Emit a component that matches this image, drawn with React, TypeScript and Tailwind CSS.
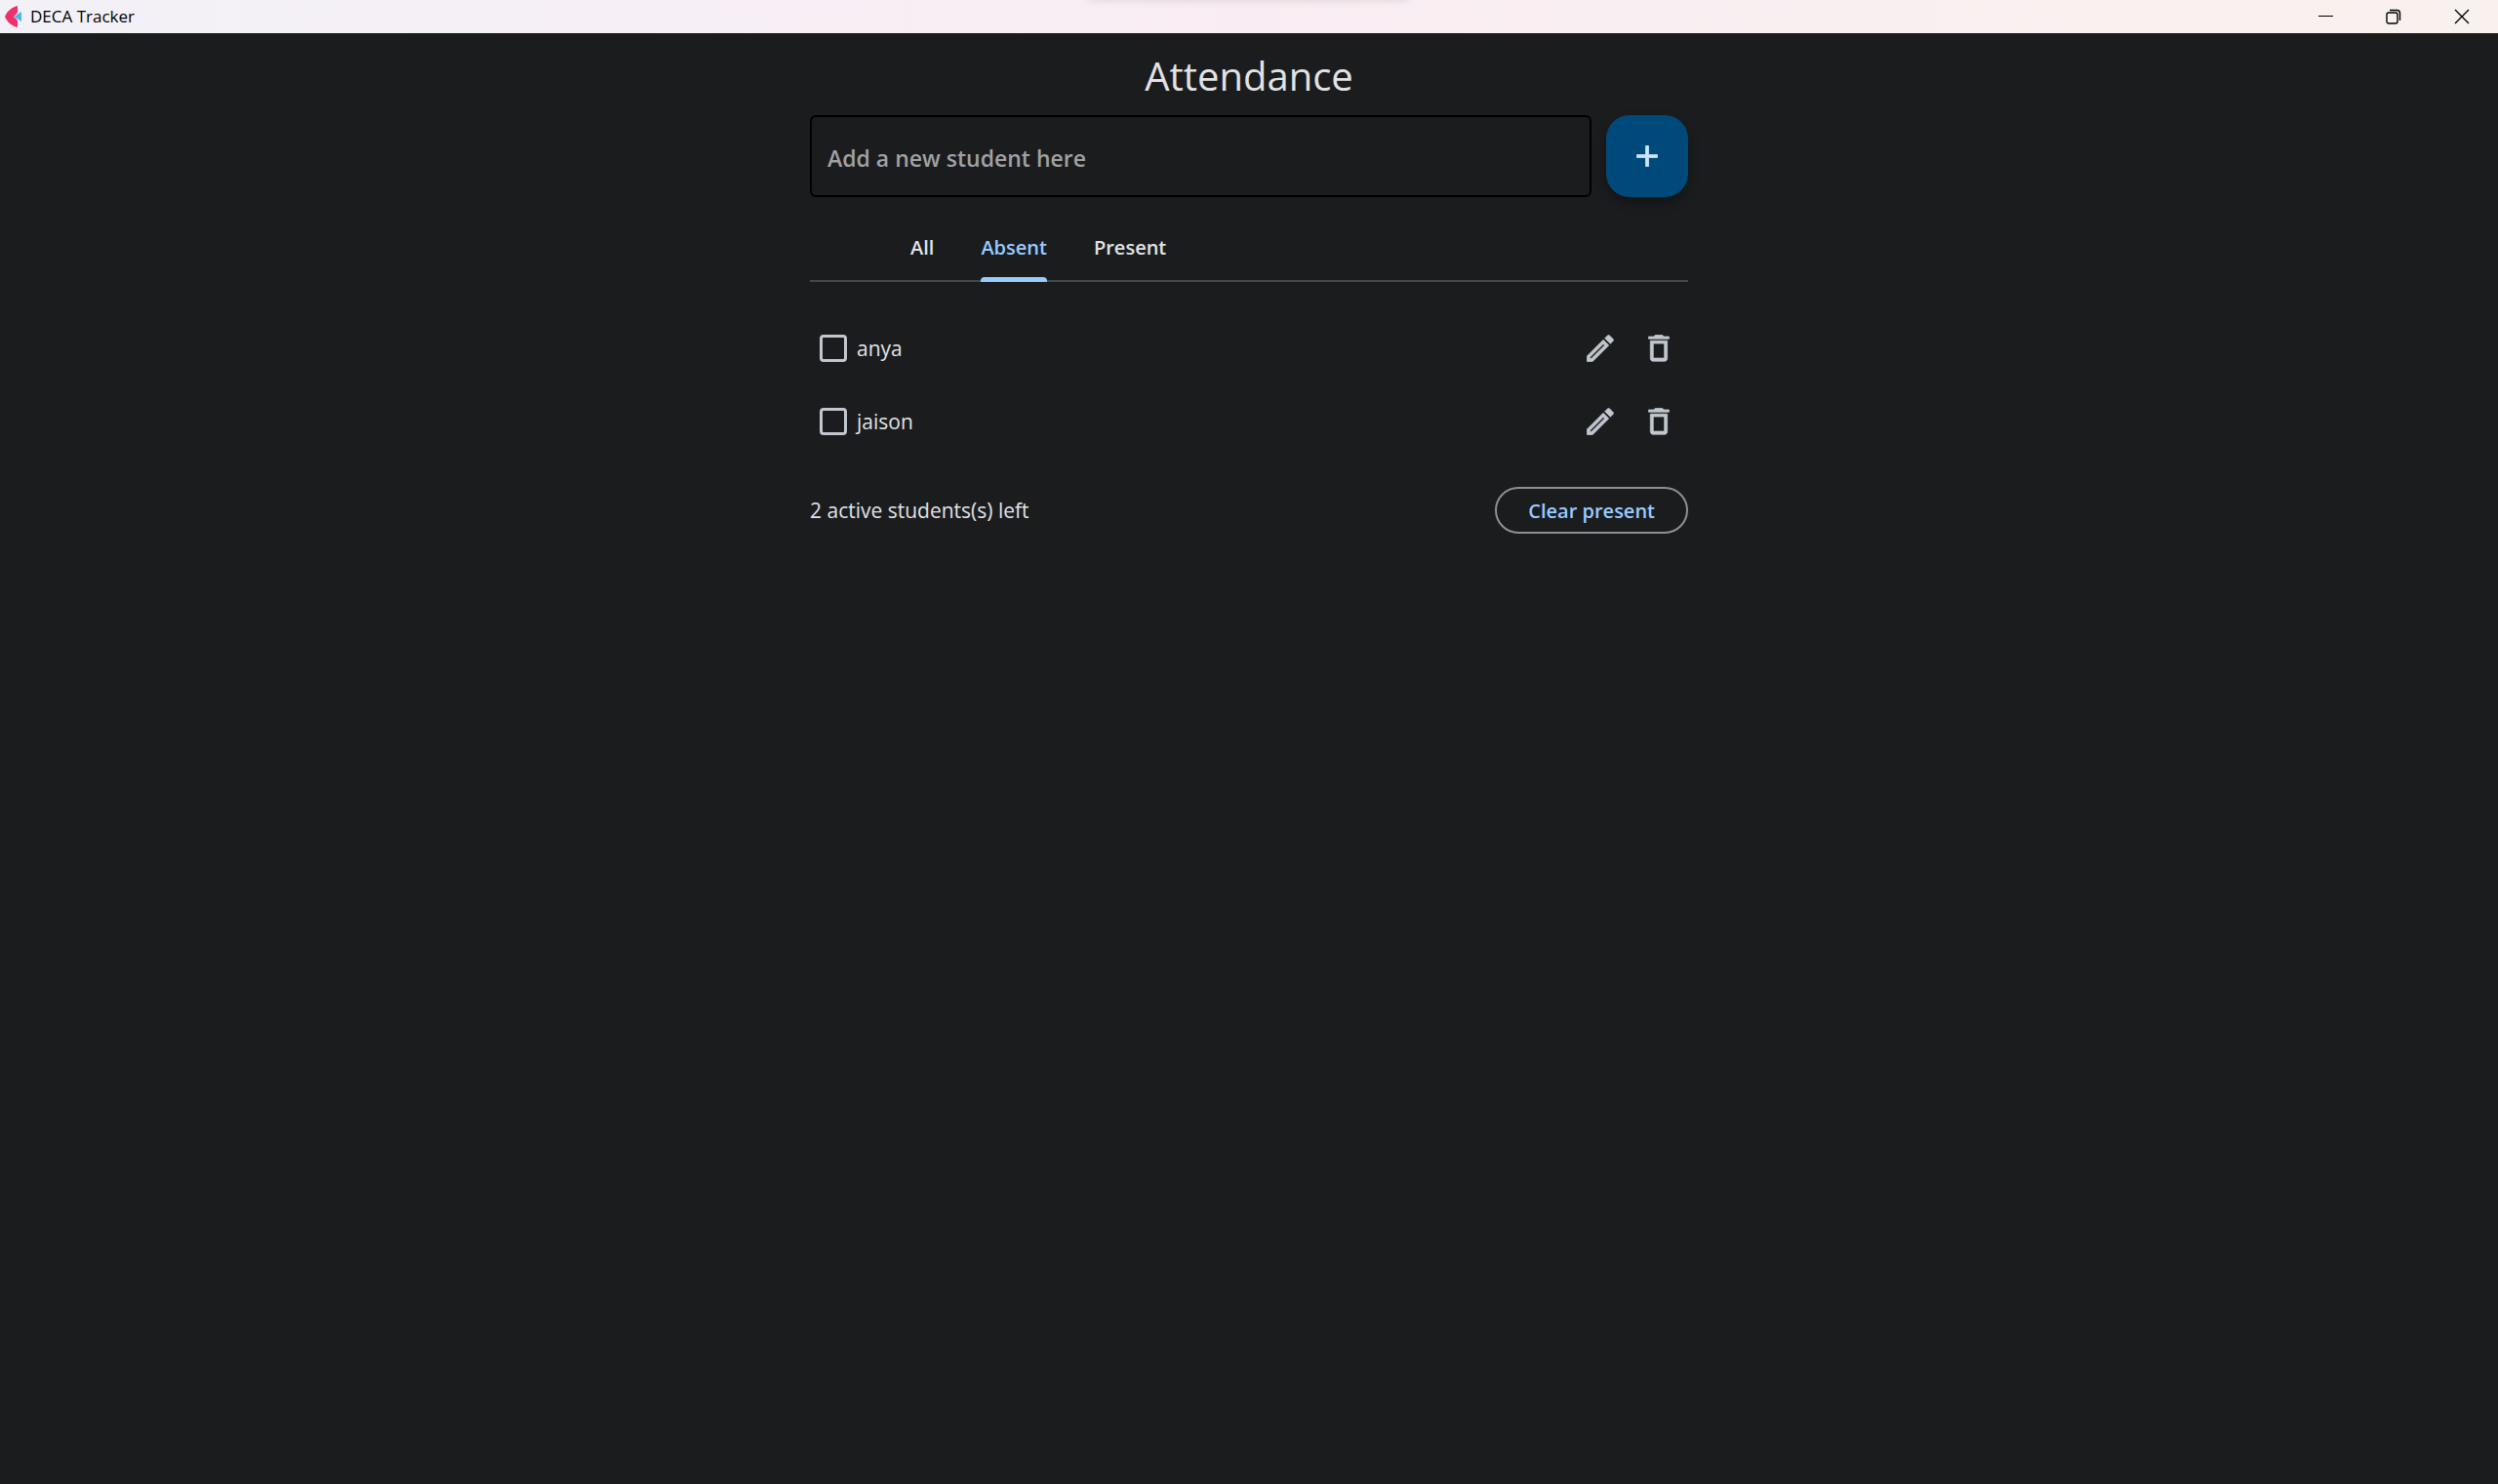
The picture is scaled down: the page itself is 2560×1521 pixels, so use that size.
import { useState } from 'react';
import type { ReactNode } from 'react';

type Filter = 'All' | 'Absent' | 'Present';
type Student = { id: number; name: string; present: boolean };

const FILTERS: Filter[] = ['All', 'Absent', 'Present'];

function Icon({ path }: { path: string }) {
  return (
    <svg
      viewBox="0 0 24 24"
      className="size-9 fill-current stroke-current"
      strokeWidth={0.5}
      strokeLinejoin="round"
      aria-hidden="true"
    >
      <path d={path} />
    </svg>
  );
}

const ADD = 'M19 13h-6v6h-2v-6H5v-2h6V5h2v6h6v2z';
const EDIT =
  'M14.06 9.02l.92.92L5.92 19H5v-.92l9.06-9.06M17.66 3c-.25 0-.51.1-.7.29l-1.83 1.83 3.75 3.75 1.83-1.83c.39-.39.39-1.02 0-1.41l-2.34-2.34c-.2-.2-.45-.29-.71-.29zm-3.6 3.19L3 17.25V21h3.75L17.81 9.94l-3.75-3.75z';
const DELETE =
  'M6.200 19c0 1 .8 1.800 1.800 1.800h8c1 0 1.800-.8 1.800-1.800V6.800H6.200V19zM8.200 8.700h7.600v10H8.200v-10zM15.500 4l-1-1h-5l-1 1H5v1.500h14V4h-3.500z';

function WindowButton({ label, children }: { label: string; children: ReactNode }) {
  return (
    <button type="button" aria-label={label} className="flex h-full w-[70px] items-center justify-center">
      <svg viewBox="0 0 16 16" className="size-4 fill-none stroke-black" aria-hidden="true">
        {children}
      </svg>
    </button>
  );
}

function TitleBar() {
  return (
    <header className="relative flex h-[34px] items-center justify-between overflow-hidden bg-linear-to-r from-[#f2f1f7] via-[#f9edf3] to-[#f9f1ee]">
      <div className="absolute -top-2 left-1/2 h-2 w-[328px] -translate-x-1/2 rounded-full shadow-[0_0_8px_rgba(0,0,0,0.12)]" />
      <div className="flex items-center gap-2 pl-[5px]">
        <svg viewBox="0 0 18 22" className="h-[22px] w-[18px]" aria-hidden="true">
          <path d="M13 0C6 2 2 6 0 11c2 5 6 9 13 11V15l-4-4 4-4z" fill="#ee3167" />
          <path d="M17 6v10l-8-5z" fill="#55b4e6" />
        </svg>
        <span className="text-[17px] leading-6 text-black">DECA Tracker</span>
      </div>
      <div className="flex h-full pr-0.5">
        <WindowButton label="Minimize">
          <path d="M1 7.500h15" />
        </WindowButton>
        <WindowButton label="Restore">
          <rect x="1" y="4" width="11" height="11" rx="2" strokeWidth="1.4" />
          <path d="M4 1.500h7.500a3 3 0 0 1 3 3V12" strokeWidth="1.4" />
        </WindowButton>
        <WindowButton label="Close">
          <path d="M1 1l14 14M15 1L1 15" strokeWidth="1.4" />
        </WindowButton>
      </div>
    </header>
  );
}

export default function App() {
  const [students, setStudents] = useState<Student[]>([
    { id: 1, name: 'anya', present: false },
    { id: 2, name: 'jaison', present: false },
  ]);
  const [filter, setFilter] = useState<Filter>('Absent');
  const [draft, setDraft] = useState('');

  const visible = students.filter((s) => filter === 'All' || s.present === (filter === 'Present'));
  const active = students.filter((s) => !s.present).length;

  const add = () => {
    if (!draft.trim()) return;
    setStudents([...students, { id: Date.now(), name: draft.trim(), present: false }]);
    setDraft('');
  };

  return (
    <div className="flex min-h-screen flex-col bg-[#1a1c1e] font-['Open_Sans',sans-serif] text-[#e2e2e5]">
      <TitleBar />
      <main className="mx-auto w-full max-w-[900px] pt-4">
        <h1 className="text-center text-[40px] leading-[56px]">Attendance</h1>

        <form
          className="mt-3 flex gap-[15px]"
          onSubmit={(e) => {
            e.preventDefault();
            add();
          }}
        >
          <input
            type="text"
            aria-label="New student"
            placeholder="Add a new student here"
            value={draft}
            onChange={(e) => setDraft(e.target.value)}
            className="h-[84px] min-w-0 flex-1 rounded-md border-2 border-black bg-transparent px-4 pt-1 text-[23px] font-semibold outline-none placeholder:text-[#a0a1a2]"
          />
          <button
            type="submit"
            aria-label="Add student"
            className="flex size-[84px] items-center justify-center rounded-3xl bg-[#004a7b] text-[#cfe5ff] shadow-[0_6px_12px_rgba(0,0,0,0.3)]"
          >
            <Icon path={ADD} />
          </button>
        </form>

        <div role="tablist" className="mt-[15px] flex h-[72px] border-b-2 border-[#43474e] pl-[79px]">
          {FILTERS.map((f) => (
            <button
              key={f}
              type="button"
              role="tab"
              aria-selected={f === filter}
              onClick={() => setFilter(f)}
              className="group relative px-6 pt-1 text-[20px] font-semibold aria-selected:text-[#99cbff]"
            >
              {f}
              <span className="absolute inset-x-6 -bottom-0.5 hidden h-[5px] rounded-t bg-[#99cbff] group-aria-selected:block" />
            </button>
          ))}
        </div>

        <ul className="mt-[38px] flex flex-col gap-[15px]">
          {visible.map((s) => (
            <li key={s.id} className="flex h-[60px] items-center">
              <label className="flex flex-1 items-center gap-2.5 pl-2.5 text-[21px]">
                <input
                  type="checkbox"
                  checked={s.present}
                  onChange={() =>
                    setStudents(students.map((o) => (o.id === s.id ? { ...o, present: !o.present } : o)))
                  }
                  className="size-7 appearance-none rounded-[4px] border-3 border-[#c2c7cf] checked:bg-[#99cbff]"
                />
                <span className="pt-0.5">{s.name}</span>
              </label>
              <button
                type="button"
                aria-label={`Edit ${s.name}`}
                className="flex size-[60px] items-center justify-center text-[#c2c7cf]"
              >
                <Icon path={EDIT} />
              </button>
              <button
                type="button"
                aria-label={`Delete ${s.name}`}
                onClick={() => setStudents(students.filter((o) => o.id !== s.id))}
                className="flex size-[60px] items-center justify-center text-[#c2c7cf]"
              >
                <Icon path={DELETE} />
              </button>
            </li>
          ))}
        </ul>

        <div className="mt-[37px] flex items-center justify-between">
          <p className="pt-0.5 text-[21px]">{active} active students(s) left</p>
          <button
            type="button"
            onClick={() => setStudents(students.filter((s) => !s.present))}
            className="h-12 rounded-full border-2 border-[#8c9199] px-8 pt-0.5 text-[20px] font-semibold text-[#99cbff]"
          >
            Clear present
          </button>
        </div>
      </main>
    </div>
  );
}
